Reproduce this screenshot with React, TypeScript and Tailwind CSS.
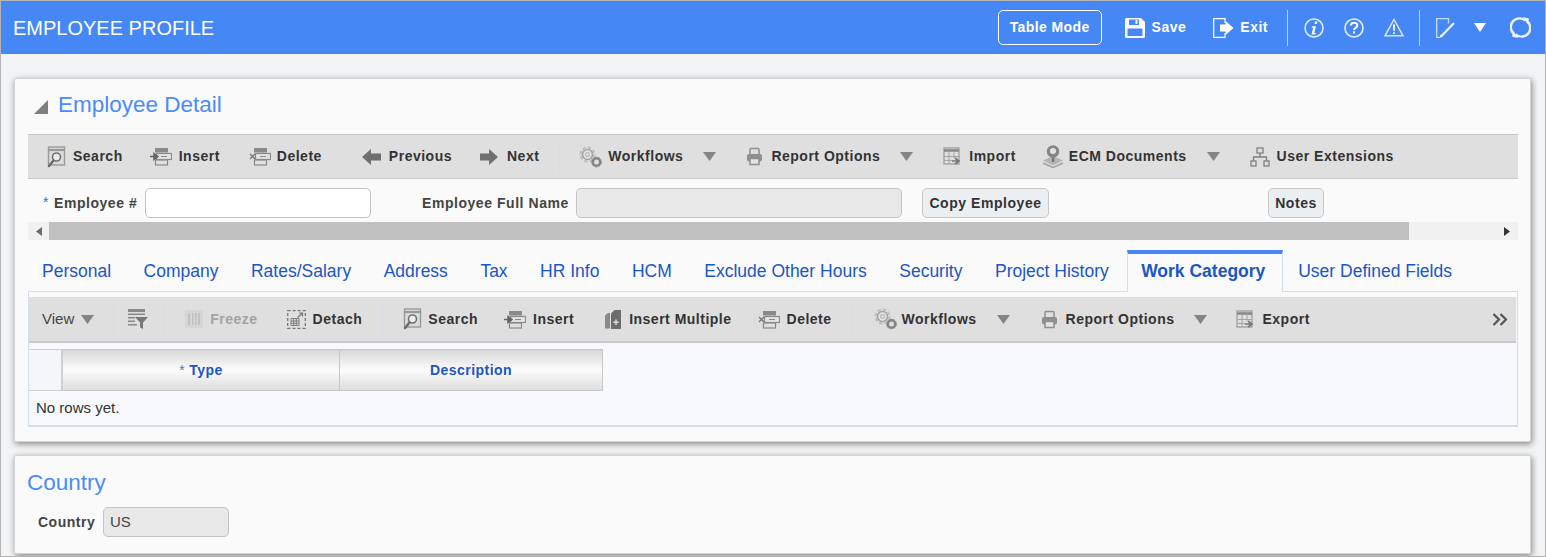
import type { ReactNode } from 'react';

const G = '#8a8a8a';

function Caret({ className = '' }: { className?: string }) {
  return (
    <svg width="13" height="9" viewBox="0 0 13 9" className={`shrink-0 ${className}`}>
      <path d="M0 0h13L6.5 9z" fill="#858585" />
    </svg>
  );
}

function SearchIcon() {
  return (
    <svg width="19" height="22" viewBox="0 0 19 22" fill="none" className="shrink-0">
      <rect x="1.5" y="1" width="16" height="18" fill="#dcdcdc" stroke="#999" strokeWidth="1.4" />
      <path d="M1.5 4h16" stroke="#999" strokeWidth="2.2" />
      <circle cx="9.5" cy="11" r="4" fill="#ececec" stroke="#707070" strokeWidth="1.6" />
      <path d="M6.500 14.500 2 20" stroke="#6a6a6a" strokeWidth="2.400" strokeLinecap="round" />
    </svg>
  );
}

function RowIcon({ del = false }: { del?: boolean }) {
  return (
    <svg width="22" height="19" viewBox="0 0 22 19" fill="none" className="shrink-0">
      <rect x="5" y="1" width="13" height="4.500" fill={G} />
      <rect x="5.500" y="13" width="12" height="5" fill="#e0e0e0" stroke={G} strokeWidth="1.200" />
      <rect x="6.500" y="6.500" width="15" height="6" fill="#e4e4e4" stroke={G} strokeWidth="1.200" />
      <path d="M11 9.500h6" stroke={G} strokeWidth="1" />
      {del ? (
        <path d="M1 7l5 5M6 7l-5 5" stroke="#777" strokeWidth="1.400" />
      ) : (
        <path d="M0 9.500h6M4 6.500l4 3-4 3z" fill="#666" stroke="#666" strokeWidth="1.500" />
      )}
    </svg>
  );
}

function ArrowLeft() {
  return (
    <svg width="19" height="16" viewBox="0 0 19 16" className="shrink-0">
      <path d="M0 8 9 0v4.500h10v7H9V16z" fill="#6f6f6f" />
    </svg>
  );
}

function ArrowRight() {
  return (
    <svg width="18" height="16" viewBox="0 0 18 16" className="shrink-0">
      <path d="M18 8 9 0v4.500H0v7h9V16z" fill="#6f6f6f" />
    </svg>
  );
}

function Gears() {
  return (
    <svg width="23" height="22" viewBox="0 0 23 22" fill="none" className="shrink-0">
      <circle cx="8.500" cy="8.500" r="7" stroke="#bdbdbd" strokeWidth="2" strokeDasharray="3.500 2" />
      <circle cx="8.500" cy="8.500" r="5" fill="#e6e6e6" stroke="#a3a3a3" strokeWidth="1.600" />
      <circle cx="8.500" cy="8.500" r="2.200" fill="#d8d8d8" stroke="#b5b5b5" strokeWidth="1" />
      <circle cx="17.500" cy="16" r="3.800" stroke="#848484" strokeWidth="2.600" />
      <circle cx="17.500" cy="16" r="5" stroke="#9a9a9a" strokeWidth="1" strokeDasharray="2 1.500" />
    </svg>
  );
}

function Printer() {
  return (
    <svg width="17" height="19" viewBox="0 0 17 19" fill="none" className="shrink-0">
      <path d="M4 7V2.500q0-1 1-1h7q1 0 1 1V7" stroke="#8f8f8f" strokeWidth="1.500" />
      <rect x="1" y="7" width="15" height="7.500" rx="2" fill="#8f8f8f" />
      <rect x="4" y="11.500" width="9" height="6" fill="#e4e4e4" stroke="#8f8f8f" strokeWidth="1.500" />
    </svg>
  );
}

function TableArrow() {
  return (
    <svg width="18" height="19" viewBox="0 0 18 19" fill="none" className="shrink-0">
      <rect x="1" y="1" width="15" height="16" fill="#dedede" stroke="#999" strokeWidth="1.200" />
      <path d="M1 3.500h15" stroke="#8a8a8a" strokeWidth="2.600" />
      <path d="M1 9.500h15M1 13.500h8M6 5v12M11 5v6" stroke="#a5a5a5" strokeWidth="1" />
      <path d="M9 14h6M12 11l4 3-4 3" stroke="#777" strokeWidth="1.600" />
    </svg>
  );
}

function Ecm() {
  return (
    <svg width="20" height="23" viewBox="0 0 20 23" fill="none" className="shrink-0">
      <path d="M0 15.500l10-4.500 10 4.500-10 5z" fill="#b4b4b4" />
      <path d="M0 18l10 4.500L20 18" stroke="#a6a6a6" strokeWidth="1.800" />
      <path d="M10 10v7" stroke="#777" strokeWidth="2.400" />
      <circle cx="10" cy="6.500" r="6.200" fill="#868686" />
      <circle cx="10" cy="6" r="3" fill="#e2e2e2" />
    </svg>
  );
}

function Hierarchy() {
  return (
    <svg width="20" height="20" viewBox="0 0 20 20" fill="none" stroke="#808080" strokeWidth="1.300" className="shrink-0">
      <rect x="7" y="1" width="6" height="5" />
      <path d="M10 6v4M3.500 14v-4h13v4" />
      <rect x="1" y="14" width="5" height="5" />
      <rect x="14" y="14" width="5" height="5" />
    </svg>
  );
}

function FilterTable() {
  return (
    <svg width="20" height="20" viewBox="0 0 20 20" className="shrink-0">
      <path d="M0 0h17v3H0zM0 4.500h17v1.600H0zM0 8h7v1.600H0zM0 11.500h7v1.600H0zM0 15h9v1.600H0z" fill="#8a8a8a" />
      <path d="M7 8h13l-5 5.500V20l-3-1.800v-4.700z" fill="#777" />
    </svg>
  );
}

function Freeze() {
  return (
    <svg width="18" height="18" viewBox="0 0 18 18" className="shrink-0">
      <rect width="18" height="18" rx="1" fill="#d6d6d6" />
      <path d="M3 3h2v12H3zM7 3h1.500v12H7zM10 3h1.500v12H10zM13 3h2v12h-2z" fill="#c2c2c2" />
    </svg>
  );
}

function Detach() {
  return (
    <svg width="19" height="19" viewBox="0 0 19 19" fill="none" className="shrink-0">
      <rect x="0.700" y="0.700" width="17.600" height="17.600" stroke="#777" strokeWidth="1.300" strokeDasharray="3 2" />
      <path d="M4 8.500h8v7H4zM4 11h8M4 13.300h8M6.700 8.500v7M9.300 8.500v7" stroke="#777" strokeWidth="0.900" />
      <path d="M10.500 7.500l4.500-4M12 3h3.500v3.500" stroke="#777" strokeWidth="1.200" />
    </svg>
  );
}

function InsertMultiple() {
  return (
    <svg width="16" height="19" viewBox="0 0 16 19" className="shrink-0">
      <path d="M0 5.500 3 3h2v15.500H0z" fill="#8a8a8a" />
      <path d="M6 3.500 9.500 0H16v19H6z" fill="#6d6d6d" />
      <path d="M10.200 9.500h1.600v2h2v1.600h-2v2h-1.600v-2h-2v-1.600h2z" fill="#d8d8d8" />
    </svg>
  );
}

type ItemProps = { icon?: ReactNode; label: string; gap: string; className?: string; muted?: boolean };

function Item({ icon, label, gap, className = '', muted = false }: ItemProps) {
  return (
    <div className={`flex items-center shrink-0 ${className}`}>
      {icon}
      <span className={`${gap} font-bold text-[14px] tracking-[0.5px] whitespace-nowrap ${muted ? 'text-[#a3a3a3]' : 'text-[#333333]'}`}>
        {label}
      </span>
    </div>
  );
}

function Sep({ className = '' }: { className?: string }) {
  return <div className={`w-px h-[34px] bg-[#d7dde3] shrink-0 ${className}`} />;
}

function HeaderBar() {
  return (
    <div className="h-[53px] bg-[#4588f5] flex items-center text-white shrink-0">
      <div className="ml-[12px] text-[20px] leading-none">EMPLOYEE PROFILE</div>
      <div className="ml-auto flex items-center">
        <button className="w-[104px] h-[35px] border border-white rounded-[5px] font-bold text-[14px] tracking-[0.4px]">Table Mode</button>
        <svg width="20" height="20" viewBox="0 0 20 20" className="ml-[23px] shrink-0">
          <path d="M1.500 0H16l4 4v14.500a1.500 1.500 0 0 1-1.500 1.500h-17A1.500 1.500 0 0 1 0 18.500v-17A1.500 1.500 0 0 1 1.500 0z" fill="#fff" />
          <rect x="4" y="1.500" width="10" height="5.500" fill="#4588f5" />
          <rect x="10.500" y="2.200" width="2" height="3.600" fill="#fff" />
          <rect x="2.500" y="10.500" width="15" height="7.500" fill="#4588f5" />
        </svg>
        <span className="ml-[7px] font-bold text-[14px] tracking-[0.5px]">Save</span>
        <svg width="21" height="20" viewBox="0 0 21 20" fill="none" className="ml-[27px] shrink-0">
          <path d="M12 5V.7L.7.7v18.600H12V15" stroke="#fff" strokeWidth="1.200" />
          <path d="M7 6.500h5.500V3l8 7-8 7v-3.500H7z" fill="#fff" />
        </svg>
        <span className="ml-[6px] font-bold text-[14px] tracking-[0.5px]">Exit</span>
        <div className="ml-[19px] w-px h-[36px] bg-[#b9d2fa]" />
        <svg width="20" height="20" viewBox="0 0 20 20" fill="none" className="ml-[16px] shrink-0">
          <circle cx="10" cy="10" r="9" stroke="#e4eefe" strokeWidth="1.500" />
          <path d="M11 3.500h2.500l-.5 2.500h-2.500zM8 8.200h4l-1.800 6.800h1.600l-.4 1.500H7.500l1.700-6.800H7.700z" fill="#fff" />
        </svg>
        <svg width="20" height="20" viewBox="0 0 20 20" fill="none" className="ml-[20px] shrink-0">
          <circle cx="10" cy="10" r="9" stroke="#e4eefe" strokeWidth="1.600" />
          <path d="M6.800 7.500C7 5.500 8.400 4.800 10 4.800c1.900 0 3.300 1 3.300 2.700 0 2.400-3.300 2.300-3.300 4.500" stroke="#fff" strokeWidth="2" />
          <rect x="9" y="13.300" width="2" height="2.200" fill="#fff" />
        </svg>
        <svg width="20" height="19" viewBox="0 0 20 19" fill="none" className="ml-[20px] shrink-0">
          <path d="M10 1.500 19 17.800H1z" stroke="#d7e5fd" strokeWidth="1.500" />
          <path d="M9 6.500h2l-.3 6.500H9.300zM9.100 14.200h1.800V16H9.100z" fill="#fff" />
        </svg>
        <div className="ml-[15px] w-px h-[36px] bg-[#b9d2fa]" />
        <svg width="20" height="20" viewBox="0 0 20 20" fill="none" className="ml-[16px] shrink-0">
          <path d="M12.500 5.500V.7H.7v18.600H4" stroke="#c9dcfc" strokeWidth="1.300" />
          <path d="M5.500 18 18 5" stroke="#eef4fe" strokeWidth="2.200" />
          <path d="M3.500 20l1-3.500 2.500 2z" fill="#eef4fe" />
        </svg>
        <svg width="12" height="9" viewBox="0 0 12 9" className="ml-[18px] shrink-0">
          <path d="M0 0h12L6 9z" fill="#fff" />
        </svg>
        <svg width="21" height="21" viewBox="0 0 21 21" fill="none" className="ml-[24px] mr-[14px] shrink-0">
          <path d="M3.500 16.500A8.400 8.400 0 0 1 15.500 3.700" stroke="#eef4fe" strokeWidth="2.400" />
          <path d="M17.500 4.500A8.400 8.400 0 0 1 5.500 17.300" stroke="#eef4fe" strokeWidth="2.400" />
          <path d="M13 0l6 1.500-1.500 5.500zM8 21l-6-1.500 1.500-5.500z" fill="#eef4fe" />
        </svg>
      </div>
    </div>
  );
}

const tabs = ['Personal', 'Company', 'Rates/Salary', 'Address', 'Tax', 'HR Info', 'HCM', 'Exclude Other Hours', 'Security', 'Project History'];

function Tabs() {
  return (
    <div className="flex h-[41px] mt-[10px] text-[17.500px] relative z-10">
      {tabs.map(t => (
        <div key={t} className="px-[14px] mr-[4.500px] flex items-center pt-[2px] text-[#1a56c4] whitespace-nowrap">
          {t}
        </div>
      ))}
      <div className="h-[42px] w-[156px] border-t-4 border-x border-t-[#4588f5] border-x-[#d5dfe9] bg-[#fafafa] flex items-center justify-center font-bold text-[#1a56c4] whitespace-nowrap pb-[3px] pr-[4px] shrink-0">
        Work Category
      </div>
      <div className="pl-[15px] flex items-center pt-[2px] text-[#1a56c4] whitespace-nowrap">User Defined Fields</div>
    </div>
  );
}

function GridPanel() {
  return (
    <div className="border border-[#d5dfe9] border-b-2 h-[136px] bg-[#f8f9fd]">
      <div className="h-[5px] bg-[#fafafa]" />
      <div className="h-[46px] mr-px bg-[#dfdfdf] border-b-2 border-[#c9c9c9] flex items-center pr-[8px]">
        <span className="ml-[13px] text-[15px] text-[#444444]">View</span>
        <Caret className="ml-[7px]" />
        <Sep className="ml-[19px]" />
        <div className="ml-[14px]"><FilterTable /></div>
        <Sep className="ml-[15px]" />
        <Item className="ml-[21px]" icon={<Freeze />} label="Freeze" gap="ml-[7px]" muted />
        <Item className="ml-[29px]" icon={<Detach />} label="Detach" gap="ml-[7px]" />
        <Sep className="ml-[20px]" />
        <Item className="ml-[20px]" icon={<SearchIcon />} label="Search" gap="ml-[6px]" />
        <Item className="ml-[26px]" icon={<RowIcon />} label="Insert" gap="ml-[7px]" />
        <Item className="ml-[31px]" icon={<InsertMultiple />} label="Insert Multiple" gap="ml-[8px]" />
        <Item className="ml-[26px]" icon={<RowIcon del />} label="Delete" gap="ml-[7px]" />
        <Sep className="ml-[20px]" />
        <Item className="ml-[21px]" icon={<Gears />} label="Workflows" gap="ml-[5px]" />
        <Caret className="ml-[20px]" />
        <Item className="ml-[31px]" icon={<Printer />} label="Report Options" gap="ml-[8px]" />
        <Caret className="ml-[20px]" />
        <Item className="ml-[29px]" icon={<TableArrow />} label="Export" gap="ml-[8px]" />
        <svg width="16" height="13" viewBox="0 0 16 13" fill="none" stroke="#555" strokeWidth="2.200" className="ml-auto shrink-0">
          <path d="M1.500 1l5.500 5.500L1.500 12M8.500 1 14 6.500 8.500 12" />
        </svg>
      </div>
      <div className="flex h-[42px] mt-[6px]">
        <div className="w-[34px] border-y border-r-2 border-[#d0d0d0] bg-[#f4f6fa]" />
        <div className="w-[277px] border-y border-r border-[#c8c8c8] bg-linear-to-b from-[#d8d8d8] via-[#fbfbfb] to-[#dedede] flex items-center justify-center text-[14px] font-bold text-[#1a56c4] tracking-[0.45px]">
          <span className="font-normal text-[#5577bb] mr-[4px]">*</span>Type
        </div>
        <div className="w-[263px] border-y border-r border-[#c8c8c8] bg-linear-to-b from-[#d8d8d8] via-[#fbfbfb] to-[#dedede] flex items-center justify-center text-[14px] font-bold text-[#1a56c4] tracking-[0.45px]">
          Description
        </div>
      </div>
      <div className="pl-[7px] mt-[7px] text-[15px] leading-[20px] text-[#333333]">No rows yet.</div>
    </div>
  );
}

export default function App() {
  return (
    <div className="w-[1546px] h-[557px] overflow-hidden border border-[#b4b4b4] bg-[#f1f3f4] flex flex-col font-[family-name:Liberation_Sans,Arial,sans-serif]">
      <HeaderBar />
      <div className="pl-[13px] pr-[14px] pt-[24px] flex flex-col gap-[13px]">
        <div className="h-[364px] border border-[#d4d4d4] bg-[#fafafa] rounded-[2px] shadow-[1px_2px_6px_rgba(0,0,0,0.45)] pl-[13px] pr-[12px] shrink-0">
          <div className="h-[55px] flex items-center">
            <svg width="14" height="14" viewBox="0 0 14 14" className="ml-[6px] mt-[1px] shrink-0">
              <path d="M14 0v14H0z" fill="#7f7f7f" />
            </svg>
            <h2 className="ml-[10px] text-[22.500px] text-[#4b8bf8] leading-none pb-[2px]">Employee Detail</h2>
          </div>
          <div className="h-[45px] bg-[#dfdfdf] border-y border-[#c9c9c9] flex items-center">
            <Item className="ml-[19px]" icon={<SearchIcon />} label="Search" gap="ml-[7px]" />
            <Item className="ml-[27px]" icon={<RowIcon />} label="Insert" gap="ml-[7px]" />
            <Item className="ml-[29px]" icon={<RowIcon del />} label="Delete" gap="ml-[6px]" />
            <Sep className="ml-[19px]" />
            <Item className="ml-[20px]" icon={<ArrowLeft />} label="Previous" gap="ml-[8px]" />
            <Item className="ml-[28px]" icon={<ArrowRight />} label="Next" gap="ml-[9px]" />
            <Sep className="ml-[20px]" />
            <Item className="ml-[19px]" icon={<Gears />} label="Workflows" gap="ml-[6px]" />
            <Caret className="ml-[20px]" />
            <Item className="ml-[30px]" icon={<Printer />} label="Report Options" gap="ml-[8px]" />
            <Caret className="ml-[20px]" />
            <Item className="ml-[30px]" icon={<TableArrow />} label="Import" gap="ml-[8px]" />
            <Item className="ml-[27px]" icon={<Ecm />} label="ECM Documents" gap="ml-[6px]" />
            <Caret className="ml-[20px]" />
            <Item className="ml-[30px]" icon={<Hierarchy />} label="User Extensions" gap="ml-[7px]" />
          </div>
          <div className="h-[43px] pt-[4px] flex items-center text-[14px] font-bold text-[#444444] tracking-[0.55px]">
            <span className="ml-[15px] font-normal text-[#3f6fc0]">*</span>
            <span className="ml-[5px] w-[84px] pt-[1px] whitespace-nowrap">Employee #</span>
            <div className="ml-[7px] w-[226px] h-[30px] bg-white border border-[#c4c4c4] rounded-[5px]" />
            <span className="ml-[51px] w-[146px] pt-[1px] whitespace-nowrap">Employee Full Name</span>
            <div className="ml-[8px] w-[326px] h-[30px] bg-[#e8e8e8] border border-[#c4c4c4] rounded-[5px]" />
            <button className="ml-[20px] w-[127px] h-[30px] pt-[1px] bg-[#eceff2] border border-[#c8c8c8] rounded-[5px] font-bold text-[#333333]">Copy Employee</button>
            <button className="ml-[219px] w-[56px] h-[30px] pt-[1px] bg-[#eceff2] border border-[#c8c8c8] rounded-[5px] font-bold text-[#333333]">Notes</button>
          </div>
          <div className="h-[18px] bg-[#f1f1f1] flex items-center">
            <svg width="6" height="9" viewBox="0 0 6 9" className="ml-[8px] shrink-0">
              <path d="M6 0v9L0 4.500z" fill="#6a6a6a" />
            </svg>
            <div className="ml-[7px] w-[1360px] h-full bg-[#c0c0c0]" />
            <svg width="6" height="9" viewBox="0 0 6 9" className="ml-auto mr-[8px] shrink-0">
              <path d="M0 0v9l6-4.500z" fill="#333" />
            </svg>
          </div>
          <Tabs />
          <GridPanel />
        </div>
        <div className="h-[99px] border border-[#d4d4d4] bg-[#fafafa] rounded-[2px] shadow-[1px_2px_6px_rgba(0,0,0,0.45)] pl-[12px] shrink-0">
          <h2 className="mt-[14px] text-[22.500px] text-[#4b8bf8] leading-[26px]">Country</h2>
          <div className="mt-[11px] flex items-center">
            <span className="ml-[11px] w-[56px] text-[14px] font-bold text-[#444444] tracking-[0.5px]">Country</span>
            <div className="ml-[9px] w-[126px] h-[30px] bg-[#e8e8e8] border border-[#c4c4c4] rounded-[5px] pl-[6px] flex items-center text-[15px] text-[#444444]">US</div>
          </div>
        </div>
      </div>
    </div>
  );
}
